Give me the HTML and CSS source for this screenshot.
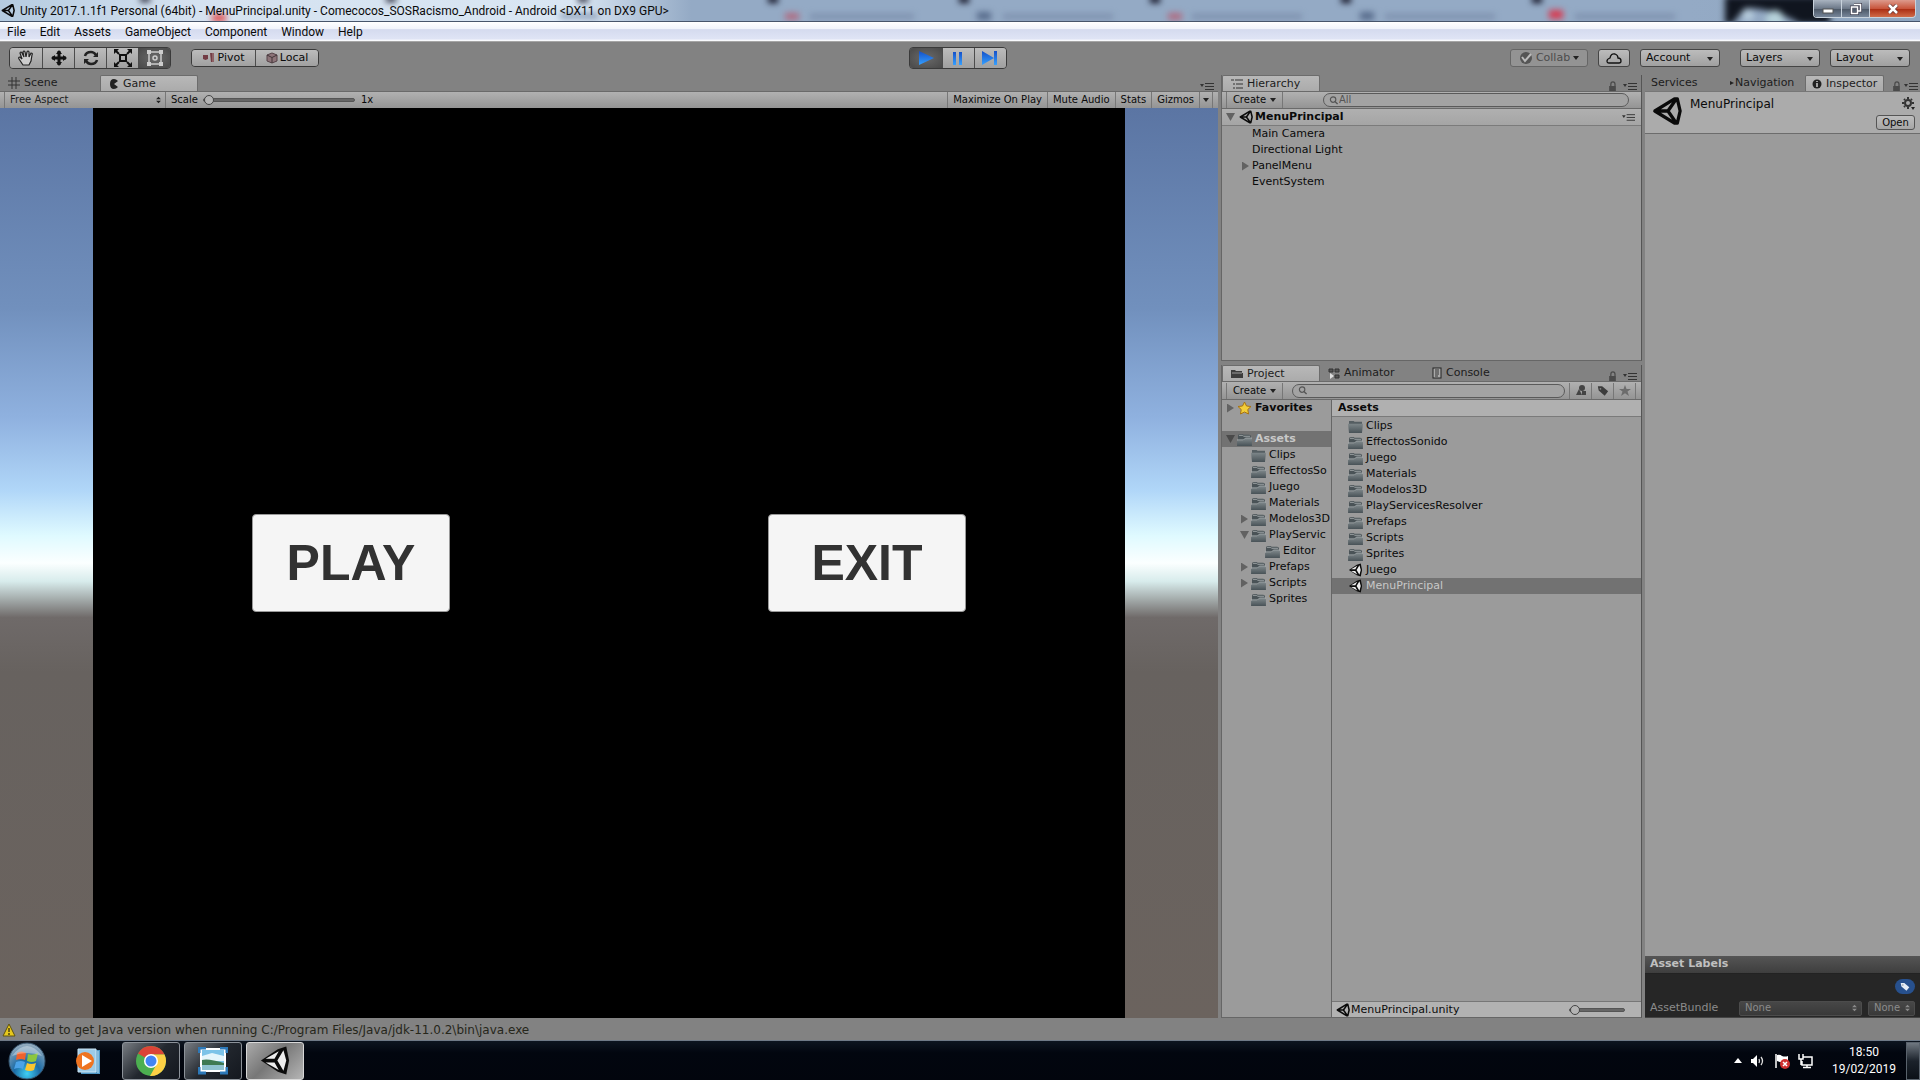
FILE: index.html
```html
<!DOCTYPE html>
<html lang="en">
<head>
    <meta charset="UTF-8">
    <meta name="viewport" content="width=device-width, initial-scale=1.0">
    <title>Unity 2017.1.1f1 Personal (64bit) - MenuPrincipal.unity</title>
    <link rel="stylesheet" href="styles.css">
</head>
<body>
    <!-- shared icons -->
    <svg class="defs" width="0" height="0" aria-hidden="true">
        <defs>
            <linearGradient id="folder-fill" x1="0" y1="0" x2="0" y2="1">
                <stop offset="0" stop-color="#7d8689"/>
                <stop offset="1" stop-color="#485257"/>
            </linearGradient>
            <linearGradient id="play-fill" x1="0" y1="0" x2="0" y2="1">
                <stop offset="0" stop-color="#1550c8"/>
                <stop offset="1" stop-color="#35a0ff"/>
            </linearGradient>
            <radialGradient id="orb-fill" cx="0.5" cy="0.85" r="0.8">
                <stop offset="0" stop-color="#3fd0f5"/>
                <stop offset="0.45" stop-color="#1c6ba5"/>
                <stop offset="1" stop-color="#8fa9bd"/>
            </radialGradient>
        </defs>
        <symbol id="unity" viewBox="0 0 32 32">
            <path d="M1 16 L19 4 L28 1 L31 16 L28 31 L19 28 Z" fill="currentColor"/>
            <path class="face" d="M6 14 L20 6 L15.500 14 Z M6 18 L15.500 18 L20 26 Z M18.500 16 L25 5 L28 16 L25 27 Z"/>
        </symbol>
        <symbol id="unity-line" viewBox="0 0 32 32">
            <path d="M3 16 L24 3 L27 3 L30 16 L27 29 L24 29 Z M3 16 H17 L26 3 M17 16 L26 29" fill="none" stroke="currentColor" stroke-width="3.500" stroke-linejoin="round"/>
        </symbol>
        <symbol id="folder" viewBox="0 0 16 14">
            <path d="M1 13 V3 Q1 1 3 1 H6 L7 2 H13 Q15 2 15 4 V13 Z" fill="#4a5357"/>
            <path d="M2 2.500 H6 L7 3.500 H14" fill="none" stroke="#a3a9ab"/>
            <path d="M0 14 V8 H7 L9 6 H16 V14 Z" fill="url(#folder-fill)"/>
            <path d="M0 7.500 H7 L9 5.500 H16" fill="none" stroke="#abb1b3"/>
        </symbol>
        <symbol id="folder-empty" viewBox="0 0 16 14">
            <path d="M1 5 V1 H6 L7 2 H15 V5" fill="#555e62"/>
            <path d="M0 4 H16 L15 14 H1 Z" fill="url(#folder-fill)"/>
        </symbol>
        <symbol id="lock" viewBox="0 0 10 12">
            <path d="M3 6 V4 Q3 1 5.500 1 Q8 1 8 4 V6" fill="none" stroke="#4a4a4a" stroke-width="1.500"/>
            <rect x="1" y="6" width="8" height="6" fill="#4a4a4a"/>
        </symbol>
        <symbol id="pane-menu" viewBox="0 0 14 10">
            <path d="M0 3 H4 L2 6 Z" fill="#333"/>
            <path d="M5 2.500 H14 M5 5.500 H14 M5 8.500 H14" stroke="#333"/>
        </symbol>
        <symbol id="updown" viewBox="0 0 6 10">
            <path d="M0 4 L3 1 L6 4 Z M0 6 L3 9 L6 6 Z" fill="currentColor"/>
        </symbol>
        <symbol id="magnifier" viewBox="0 0 10 10">
            <circle cx="4" cy="4" r="3" fill="none" stroke="#555" stroke-width="1.300"/>
            <path d="M6 6 L9 9" stroke="#555" stroke-width="1.500"/>
        </symbol>
        <symbol id="tag" viewBox="0 0 14 12">
            <path d="M1 1 H6 L13 7 L9 12 L2 6 Z" fill="currentColor"/>
            <circle cx="4" cy="4" r="1" fill="#888"/>
        </symbol>
    </svg>

    <header class="titlebar">
        <svg class="glass" aria-hidden="true">
            <g class="glass-marks">
                <rect x="212" y="14" width="14" height="8" fill="#e05050"/>
                <rect x="560" y="14" width="38" height="4" fill="#7286a3"/>
                <rect x="140" y="-4" width="10" height="6" fill="#223"/>
                <rect x="386" y="-4" width="10" height="6" fill="#223"/>
                <rect x="578" y="-4" width="10" height="6" fill="#223"/>
                <rect x="768" y="-4" width="10" height="7" fill="#112"/>
                <rect x="959" y="-4" width="10" height="7" fill="#112"/>
                <rect x="1150" y="-4" width="10" height="7" fill="#112"/>
                <rect x="1341" y="-4" width="10" height="7" fill="#112"/>
                <rect x="1532" y="-4" width="10" height="7" fill="#112"/>
                <rect x="785" y="13" width="14" height="7" fill="#b06a80"/>
                <rect x="810" y="14" width="104" height="5" fill="#7c8fac"/>
                <rect x="977" y="12" width="14" height="8" fill="#566a8a"/>
                <rect x="1003" y="14" width="110" height="5" fill="#7c8fac"/>
                <rect x="1168" y="13" width="14" height="7" fill="#b06a80"/>
                <rect x="1192" y="14" width="110" height="5" fill="#7c8fac"/>
                <rect x="1360" y="12" width="14" height="8" fill="#566a8a"/>
                <rect x="1385" y="14" width="110" height="5" fill="#7c8fac"/>
                <rect x="1549" y="10" width="14" height="9" fill="#d83a50"/>
                <rect x="1575" y="14" width="100" height="5" fill="#7c8fac"/>
                <path d="M1725 -4 H1830 V24 H1800 Q1775 8 1745 8 L1732 24 H1725 Z" fill="#10151f"/>
                <circle cx="1748" cy="15" r="6" fill="#b6ccdc"/>
                <circle cx="1775" cy="19" r="9" fill="#b6d2da"/>
            </g>
        </svg>
        <svg class="title-icon" width="14" height="15"><use href="#unity-line"/></svg>
        <h1>Unity 2017.1.1f1 Personal (64bit) - MenuPrincipal.unity - Comecocos_SOSRacismo_Android - Android &lt;DX11 on DX9 GPU&gt;</h1>
        <div class="window-buttons">
            <button aria-label="Minimize"><svg width="12" height="10"><rect x="1" y="5" width="10" height="4" fill="#fff" stroke="#555"/></svg></button>
            <button aria-label="Restore"><svg width="12" height="12"><path d="M4 1.500 H10.500 V8 H8 M1.500 4 H7.500 V10.500 H1.500 Z" fill="none" stroke="#445" stroke-width="3"/><path d="M4 1.500 H10.500 V8 H8 M1.500 4 H7.500 V10.500 H1.500 Z" fill="none" stroke="#fff" stroke-width="1.500"/></svg></button>
            <button class="close" aria-label="Close"><svg width="12" height="10"><path d="M2 1 L10 9 M10 1 L2 9" stroke="#633" stroke-width="4"/><path d="M2 1 L10 9 M10 1 L2 9" stroke="#fff" stroke-width="2.500"/></svg></button>
        </div>
    </header>

    <nav class="menubar">
        <button>File</button>
        <button>Edit</button>
        <button>Assets</button>
        <button>GameObject</button>
        <button>Component</button>
        <button>Window</button>
        <button>Help</button>
    </nav>

    <div class="toolbar">
        <div class="toolbar-left">
            <div class="tools">
                <button aria-label="Hand"><svg width="18" height="18"><path d="M6 16 L2 10 Q1 8 3 8 L5 10 L3 4 Q4 2 5 4 L7 8 L6 3 Q7 1 8 3 L9 8 L10 3 Q11 1 12 3 L12 8 L14 4 Q16 4 15 6 L14 12 L12 16 Z" fill="#ccc" stroke="#222" stroke-width="1.200"/></svg></button>
                <button aria-label="Move"><svg width="18" height="18"><path d="M9 2 V16 M2 9 H16" stroke="#111" stroke-width="3"/><path d="M9 1 L12 5 H6 Z M9 17 L12 13 H6 Z M1 9 L5 6 V12 Z M17 9 L13 6 V12 Z" fill="#111"/></svg></button>
                <button aria-label="Rotate"><svg width="18" height="18"><path d="M3 7 Q4 3 9 3 Q12 3 14 6 M15 11 Q14 15 9 15 Q6 15 4 12" fill="none" stroke="#222" stroke-width="2.500"/><path d="M16 3 V8 H11 Z M2 15 V10 H7 Z" fill="#222"/></svg></button>
                <button aria-label="Scale objects"><svg width="18" height="18"><rect x="6" y="6" width="6" height="6" fill="none" stroke="#111" stroke-width="2"/><path d="M1 1 L5 5 M17 1 L13 5 M1 17 L5 13 M17 17 L13 13" stroke="#111" stroke-width="2"/><path d="M0 0 H5 L0 5 Z M18 0 H13 L18 5 Z M0 18 H5 L0 13 Z M18 18 H13 L18 13 Z" fill="#111"/></svg></button>
                <button class="pressed" aria-label="Rect"><svg width="18" height="18"><rect x="3" y="3" width="12" height="12" fill="none" stroke="#ccc" stroke-width="1.500"/><circle cx="9" cy="9" r="2" fill="none" stroke="#ccc" stroke-width="1.500"/><path d="M1 1 H5 V5 H1 Z M13 1 H17 V5 H13 Z M1 13 H5 V17 H1 Z M13 13 H17 V17 H13 Z" fill="#ccc"/></svg></button>
            </div>
            <div class="handles">
                <button><svg width="13" height="11"><path d="M1 3 H6 V7 L3.500 8 L1 7 Z" fill="#733c44"/><path d="M8 1 H12 V10 H9 Z" fill="#733c44"/><path d="M11 1 V10" stroke="#a88"/></svg>Pivot</button>
                <button><svg width="12" height="12"><path d="M6 1 L11 3 V9 L6 11 L1 9 V3 Z" fill="#8d7479" stroke="#554349"/><path d="M1 3 L6 5.500 L11 3 M6 5.500 V11" fill="none" stroke="#403439"/></svg>Local</button>
            </div>
        </div>
        <div class="play-controls">
            <button class="pressed" aria-label="Play"><svg width="18" height="16"><path d="M2 1 L17 8 L2 15 Z" fill="url(#play-fill)"/></svg></button>
            <button aria-label="Pause"><svg width="18" height="16"><path d="M4 2 H7 V15 H4 Z M10 2 H13 V15 H10 Z" fill="url(#play-fill)"/></svg></button>
            <button aria-label="Step"><svg width="18" height="16"><path d="M1 1 L13 8 L1 15 Z M13 1 H16 V15 H13 Z" fill="url(#play-fill)"/></svg></button>
        </div>
        <div class="toolbar-right">
            <button class="collab"><svg width="14" height="14"><circle cx="7" cy="7" r="6" fill="#555"/><path d="M3 6 L6 10 L12 3" fill="none" stroke="#bbb" stroke-width="2"/></svg>Collab<span class="caret"></span></button>
            <button class="cloud" aria-label="Cloud"><svg width="16" height="12"><path d="M3 11 Q1 11 1 9 Q1 7 4 6 Q5 1 9 2 Q12 3 12 6 Q15 6 15 9 Q15 11 13 11 Z" fill="none" stroke="#111" stroke-width="1.300"/></svg></button>
            <span class="drop account"><select aria-label="Account"><option>Account</option></select></span>
            <span class="drop"><select aria-label="Layers"><option>Layers</option></select></span>
            <span class="drop"><select aria-label="Layout"><option>Layout</option></select></span>
        </div>
    </div>

    <main class="workspace">
        <section class="game">
            <div class="tabs">
                <button class="tab scene-tab"><svg width="12" height="12"><path d="M4 0 V12 M8 0 V12 M0 4 H12 M0 8 H12" stroke="#333"/></svg>Scene</button>
                <button class="tab active game-tab"><svg width="10" height="10"><path d="M9 2 Q7 0 5 0 Q1 0 1 5 Q1 10 5 10 Q7 10 9 8 L5 5 Z" fill="#222"/></svg>Game</button>
                <span class="tab-tools"><svg width="14" height="10"><use href="#pane-menu"/></svg></span>
            </div>
            <div class="subbar">
                <span class="aspect"><select aria-label="Aspect"><option>Free Aspect</option></select><svg width="5" height="8"><use href="#updown"/></svg></span>
                <label for="scale">Scale</label>
                <input id="scale" class="scale" type="range" min="1" max="5" value="1">
                <span class="scale-value">1x</span>
                <div class="subbar-buttons">
                    <button>Maximize On Play</button>
                    <button>Mute Audio</button>
                    <button>Stats</button>
                    <button>Gizmos</button>
                    <button class="gizmos-arrow" aria-label="Gizmos menu"><span class="caret"></span></button>
                </div>
            </div>
            <div class="viewport">
                <div class="stage">
                    <button>PLAY</button>
                    <button>EXIT</button>
                </div>
            </div>
        </section>

        <div class="middle">
            <section class="hierarchy">
                <div class="tabs">
                    <button class="tab active hierarchy-tab"><svg width="12" height="10"><path d="M0 1 H3 M4 1 H12 M2 5 H4 M5 5 H12 M2 9 H4 M5 9 H12" stroke="#333"/></svg>Hierarchy</button>
                    <span class="tab-tools"><svg width="9" height="10"><use href="#lock"/></svg><svg width="14" height="10"><use href="#pane-menu"/></svg></span>
                </div>
                <div class="subbar">
                    <button class="create">Create<span class="caret"></span></button>
                    <label class="search hierarchy-search"><svg width="10" height="9"><use href="#magnifier"/></svg><input type="text" placeholder="All" aria-label="Search hierarchy"></label>
                </div>
                <div class="scene-row"><span class="arrow open"></span><svg width="14" height="14"><use href="#unity-line"/></svg><b>MenuPrincipal</b><svg class="row-menu" width="13" height="10"><use href="#pane-menu"/></svg></div>
                <ul class="tree objects">
                    <li><span class="arrow none"></span>Main Camera</li>
                    <li><span class="arrow none"></span>Directional Light</li>
                    <li><span class="arrow"></span>PanelMenu</li>
                    <li><span class="arrow none"></span>EventSystem</li>
                </ul>
            </section>

            <section class="project">
                <div class="tabs">
                    <button class="tab active project-tab"><svg width="12" height="10"><path d="M0 9 V1 H4 L5 2 H11 V4 H12 V9 Z" fill="#3c3c3c"/><path d="M1 4 H11" stroke="#999"/></svg>Project</button>
                    <button class="tab animator-tab"><svg width="12" height="11"><path d="M1 1 H5 V4 H1 Z M7 1 H11 V4 H7 Z M7 7 H11 V10 H7 Z" fill="#555" stroke="#333"/><path d="M2 5 L6 8 L2 11 Z" fill="#ddd"/></svg>Animator</button>
                    <button class="tab console-tab"><svg width="10" height="12"><rect x="1" y="1" width="8" height="10" fill="#aaa" stroke="#222"/><path d="M3 3 H7 M3 5 H7 M3 7 H7 M3 9 H6" stroke="#333"/></svg>Console</button>
                    <span class="tab-tools"><svg width="9" height="10"><use href="#lock"/></svg><svg width="14" height="10"><use href="#pane-menu"/></svg></span>
                </div>
                <div class="subbar">
                    <button class="create">Create<span class="caret"></span></button>
                    <label class="search project-search"><svg width="10" height="9"><use href="#magnifier"/></svg><input type="text" aria-label="Search project"></label>
                    <div class="filters">
                        <button aria-label="Search by type"><svg width="12" height="11"><path d="M1 10 L4 4 L7 10 Z" fill="#444"/><circle cx="7" cy="3" r="3" fill="#444"/><rect x="7" y="6" width="4" height="4" fill="#444"/></svg></button>
                        <button aria-label="Search by label"><svg class="tag" width="12" height="11"><use href="#tag"/></svg></button>
                        <button aria-label="Save search"><svg width="12" height="11"><path d="M6 0 L7.500 4 H12 L8.500 6.500 L10 11 L6 8.200 L2 11 L3.500 6.500 L0 4 H4.500 Z" fill="#6c6c6c"/></svg></button>
                    </div>
                </div>
                <div class="browser">
                    <ul class="tree folders">
                        <li class="favorites"><span class="arrow"></span><svg width="15" height="14" viewBox="0 0 15 14"><path d="M7.500 1 L9.500 5 L14 5.500 L10.800 8.500 L11.500 13 L7.500 11 L3.500 13 L4.200 8.500 L1 5.500 L5.500 5 Z" fill="#f2ce3a" stroke="#a9730f"/></svg><b>Favorites</b></li>
                        <li class="selected"><span class="arrow open"></span><svg width="15" height="13"><use href="#folder"/></svg><b>Assets</b></li>
                        <li class="child"><span class="arrow none"></span><svg width="15" height="13"><use href="#folder-empty"/></svg>Clips</li>
                        <li class="child"><span class="arrow none"></span><svg width="15" height="13"><use href="#folder"/></svg>EffectosSo</li>
                        <li class="child"><span class="arrow none"></span><svg width="15" height="13"><use href="#folder"/></svg>Juego</li>
                        <li class="child"><span class="arrow none"></span><svg width="15" height="13"><use href="#folder"/></svg>Materials</li>
                        <li class="child"><span class="arrow"></span><svg width="15" height="13"><use href="#folder"/></svg>Modelos3D</li>
                        <li class="child"><span class="arrow open"></span><svg width="15" height="13"><use href="#folder"/></svg>PlayServic</li>
                        <li class="grandchild"><span class="arrow none"></span><svg width="15" height="13"><use href="#folder"/></svg>Editor</li>
                        <li class="child"><span class="arrow"></span><svg width="15" height="13"><use href="#folder"/></svg>Prefaps</li>
                        <li class="child"><span class="arrow"></span><svg width="15" height="13"><use href="#folder"/></svg>Scripts</li>
                        <li class="child"><span class="arrow none"></span><svg width="15" height="13"><use href="#folder"/></svg>Sprites</li>
                    </ul>
                    <div class="contents">
                        <h2>Assets</h2>
                        <ul class="tree files">
                            <li><svg width="15" height="13"><use href="#folder-empty"/></svg>Clips</li>
                            <li><svg width="15" height="13"><use href="#folder"/></svg>EffectosSonido</li>
                            <li><svg width="15" height="13"><use href="#folder"/></svg>Juego</li>
                            <li><svg width="15" height="13"><use href="#folder"/></svg>Materials</li>
                            <li><svg width="15" height="13"><use href="#folder"/></svg>Modelos3D</li>
                            <li><svg width="15" height="13"><use href="#folder"/></svg>PlayServicesResolver</li>
                            <li><svg width="15" height="13"><use href="#folder"/></svg>Prefaps</li>
                            <li><svg width="15" height="13"><use href="#folder"/></svg>Scripts</li>
                            <li><svg width="15" height="13"><use href="#folder"/></svg>Sprites</li>
                            <li><svg width="15" height="14"><use href="#unity"/></svg>Juego</li>
                            <li class="selected"><svg width="15" height="14"><use href="#unity"/></svg>MenuPrincipal</li>
                        </ul>
                        <div class="path-bar">
                            <svg width="14" height="14"><use href="#unity-line"/></svg>
                            <span>MenuPrincipal.unity</span>
                            <input class="zoom" type="range" value="0" aria-label="Icon size">
                        </div>
                    </div>
                </div>
            </section>
        </div>

        <section class="inspector">
            <div class="tabs">
                <button class="tab services-tab">Services</button>
                <button class="tab navigation-tab"><svg width="4" height="6"><path d="M0 1 L4 3 L0 5 Z" fill="#222"/></svg>Navigation</button>
                <button class="tab active inspector-tab"><svg width="10" height="10"><circle cx="5" cy="5" r="4.500" fill="#222"/><path d="M5 2 V3 M5 4 V8" stroke="#ccc" stroke-width="1.500"/></svg>Inspector</button>
                <span class="tab-tools"><svg width="9" height="10"><use href="#lock"/></svg><svg width="14" height="10"><use href="#pane-menu"/></svg></span>
            </div>
            <div class="asset-header">
                <svg width="30" height="32"><use href="#unity-line"/></svg>
                <h2>MenuPrincipal</h2>
                <div class="asset-actions">
                    <button class="gear" aria-label="Settings"><svg width="13" height="13"><circle cx="6" cy="6" r="3" fill="none" stroke="#333" stroke-width="2"/><path d="M6 0 V2 M6 10 V12 M0 6 H2 M10 6 H12 M2 2 L3 3 M9 3 L10 2 M2 10 L3 9" stroke="#333" stroke-width="2"/><path d="M9 10 H13 L11 13 Z" fill="#222"/></svg></button>
                    <button class="open-button">Open</button>
                </div>
            </div>
            <div class="inspector-body"></div>
            <div class="labels">
                <h3>Asset Labels</h3>
                <div class="labels-body">
                    <button class="label-tag" aria-label="Add label"><svg width="10" height="9"><use href="#tag"/></svg></button>
                    <div class="bundle">
                        <label for="bundle">AssetBundle</label>
                        <span class="bundle-select"><select id="bundle"><option>None</option></select><svg width="5" height="8"><use href="#updown"/></svg></span>
                        <span class="bundle-select variant"><select aria-label="Variant"><option>None</option></select><svg width="5" height="8"><use href="#updown"/></svg></span>
                    </div>
                </div>
            </div>
        </section>
    </main>

    <div class="status">
        <svg width="14" height="14"><path d="M7 1 L13 13 H1 Z" fill="#e8c91c" stroke="#5e5210" stroke-linejoin="round"/><path d="M7 5 V9 M7 10 V12" stroke="#4a4110" stroke-width="1.500"/></svg>
        <span>Failed to get Java version when running C:/Program Files/Java/jdk-11.0.2\bin\java.exe</span>
    </div>

    <footer class="taskbar">
        <button class="start" aria-label="Start"><svg width="38" height="38" viewBox="0 0 38 38"><circle cx="19" cy="19" r="18" fill="url(#orb-fill)" stroke="#35526b"/><path d="M9 11 Q14 8 18 11 L17 18 Q13 16 8 18 Z" fill="#f0622c"/><path d="M20 12 Q24 14 30 11 L28 19 Q24 21 19 19 Z" fill="#8cc63f"/><path d="M8 20 Q13 18 17 20 L15 27 Q11 25 6 27 Z" fill="#4ba3e8"/><path d="M19 21 Q23 23 28 21 L26 28 Q22 30 17 28 Z" fill="#fbc62f"/><path d="M4 14 Q19 -6 34 14 Q19 8 4 14 Z" fill="#fff" opacity="0.35"/></svg></button>
        <button class="pinned" aria-label="Media player"><svg width="28" height="28"><path d="M7 3 H26 V27 H7 Z" fill="#4e96c4"/><path d="M4 2 H22 V25 H4 Z" fill="#9ccbe8" stroke="#cde6f5"/><path d="M24 4 V26" stroke="#bde0f3"/><circle cx="11" cy="14" r="9" fill="#ee7421"/><path d="M8 8 L18 14 L8 20 Z" fill="#fff"/></svg></button>
        <button class="task" aria-label="Chrome"><svg width="32" height="32" viewBox="0 0 32 32"><circle cx="16" cy="16" r="15" fill="#4caf50"/><path d="M16 16 L3 8.500 A15 15 0 0 1 29.500 9.500 H16 Z" fill="#db4437"/><path d="M16 9.500 H29.500 A15 15 0 0 1 15 31 L21.500 19.500 Z" fill="#fdd045"/><circle cx="16" cy="16" r="7" fill="#fff"/><circle cx="16" cy="16" r="5.500" fill="#4285f4"/></svg></button>
        <button class="task" aria-label="Pictures"><svg width="30" height="28"><rect x="3" y="2" width="24" height="22" fill="#7cc3e8" stroke="#fff" stroke-width="2"/><path d="M4 9 L14 6 L26 9 V14 H4 Z" fill="#e4f5fb"/><path d="M4 13 Q10 11 26 16 V18 H4 Z" fill="#3f7a52"/><path d="M4 18 H26 V23 H4 Z" fill="#8fc2cf"/><path d="M1 6 V1 H8 M22 1 H29 V6 M29 20 V26 H22 M8 26 H1 V20" fill="none" stroke="#2c78b8" stroke-width="3"/></svg></button>
        <button class="task current" aria-label="Unity"><svg width="30" height="31"><use href="#unity"/></svg></button>
        <div class="tray">
            <svg width="8" height="5"><path d="M0 5 L4 0 L8 5 Z" fill="#fff"/></svg>
            <svg width="16" height="14"><path d="M1 5 H3 L7 1 V13 L3 9 H1 Z" fill="#fff"/><path d="M9 5 Q10 7 9 9 M11 3 Q14 7 11 11" fill="none" stroke="#ddd" stroke-width="1.300"/></svg>
            <svg width="16" height="16"><path d="M2 1 V15" stroke="#fff" stroke-width="1.500"/><path d="M3 2 Q6 1 8 3 Q11 4 14 3 V10 Q8 10 3 8 Z" fill="#fff"/><circle cx="11" cy="11" r="5" fill="#d03030"/><path d="M9 9 L13 13 M13 9 L9 13" stroke="#fff" stroke-width="1.500"/></svg>
            <svg width="16" height="16"><path d="M5 4 H14 V12 H4 V8 M9 12 V14 M5 14.500 H13 M1 1 V6 H5 V1 M3 6 V12" fill="none" stroke="#fff" stroke-width="1.500"/></svg>
            <div class="clock"><span>18:50</span><span>19/02/2019</span></div>
        </div>
        <button class="show-desktop" aria-label="Show desktop"></button>
    </footer>
</body>
</html>
```
FILE: styles.css
```css
* {
    box-sizing: border-box;
}
body {
    margin: 0;
    height: 100vh;
    display: flex;
    flex-direction: column;
    overflow: hidden;
    background-color: #828282;
    color: #0a0a0a;
    font-family: "DejaVu Sans", Verdana, sans-serif;
    font-size: 11px;
    line-height: 16px;
}
button, select, input {
    font: inherit;
    color: inherit;
    margin: 0;
    padding: 0;
    border: none;
    border-radius: 0;
    background: none;
    white-space: nowrap;
}
button {
    display: flex;
    align-items: center;
    justify-content: center;
}
select {
    appearance: none;
}
svg {
    flex: none;
}
h1, h2, h3, ul {
    margin: 0;
    padding: 0;
    font-size: inherit;
    font-weight: normal;
    list-style: none;
}
.defs {
    position: absolute;
}
.face {
    fill: #eee;
}
.caret {
    border: 3px solid transparent;
    border-top: 4px solid #222;
    border-bottom: 0;
}

/* window title */
.titlebar {
    position: relative;
    display: flex;
    align-items: center;
    height: 22px;
    padding-left: 1px;
    background: linear-gradient(90deg, #b4cbe0 0, #d5e2f0 10%, #d9e6f3 30%, #94aac5 36%, #94aac5 88%, #8fa6c0 100%);
    border-bottom: 1px solid #47556b;
    font-family: Roboto, "Segoe UI", sans-serif;
    font-size: 12px;
}
.glass {
    position: absolute;
    left: 0;
    top: 0;
    width: 100%;
    height: 100%;
}
.glass-marks {
    filter: blur(3px);
}
.title-icon, .titlebar h1, .window-buttons {
    position: relative;
}
.titlebar h1 {
    padding-left: 5px;
    flex: 1;
    white-space: nowrap;
}
.window-buttons {
    display: flex;
    align-self: flex-start;
    height: 18px;
    margin-right: 4px;
    border: 1px solid #c8d2dc;
    border-top: 0;
    border-radius: 0 0 4px 4px;
    overflow: hidden;
}
.window-buttons button {
    width: 28px;
    background: linear-gradient(#a9b3c0, #6c7888 50%, #4a5564 51%, #77869a);
    border-right: 1px solid #c8d2dc;
}
.window-buttons .close {
    width: 45px;
    border: 0;
    background: linear-gradient(#dd9a8c, #c8553c 50%, #a92a10 51%, #d06b48);
}

.menubar {
    display: flex;
    height: 20px;
    background: linear-gradient(#fff, #f1f4fb 35%, #d5dbef 40%, #dfe4f5 88%, #fff);
    border-bottom: 1px solid #a5a5a5;
    font-family: Roboto, "Segoe UI", sans-serif;
    font-size: 12px;
}
.menubar button {
    padding: 0 7px;
}

/* main toolbar */
.toolbar {
    display: grid;
    grid-template-columns: 1fr auto 1fr;
    align-items: center;
    height: 33px;
    padding: 0 10px 2px 9px;
}
.toolbar-left, .toolbar-right, .tools, .handles, .play-controls {
    display: flex;
    align-items: center;
}
.toolbar-left {
    gap: 20px;
}
.tools, .handles, .play-controls {
    border: 1px solid #3a3a3a;
    border-radius: 4px;
    overflow: hidden;
}
.toolbar button, .drop select {
    background: linear-gradient(#bcbcbc, #a0a0a0);
}
.toolbar .pressed {
    background: radial-gradient(#6a6a6a, #484848);
}
.tools button + button, .handles button + button, .play-controls button + button {
    border-left: 1px solid #4c4c4c;
}
.tools button, .play-controls button {
    width: 32px;
    height: 20px;
}
.play-controls {
    margin-right: 4px;
}
.handles button {
    width: 63px;
    height: 16px;
    gap: 2px;
}
.toolbar-right {
    justify-content: flex-end;
    gap: 10px;
}
.toolbar-right button, .drop select {
    height: 18px;
    border: 1px solid #454545;
    border-radius: 3px;
}
.toolbar-right .collab {
    width: 78px;
    gap: 3px;
    background: #939393;
    border-color: #666;
    color: #4c4c4c;
}
.cloud {
    width: 32px;
}
.drop {
    position: relative;
}
.drop select {
    display: block;
    width: 80px;
    padding-left: 5px;
}
.drop::after {
    content: "";
    position: absolute;
    right: 7px;
    top: 8px;
    border: 3px solid transparent;
    border-top: 4px solid #222;
    border-bottom: 0;
}
.account {
    margin-right: 10px;
}

/* docked panes */
.workspace {
    flex: 1;
    min-height: 0;
    display: grid;
    grid-template-columns: 1fr 421px 275px;
    gap: 3px;
}
.game, .hierarchy, .project, .inspector {
    display: flex;
    flex-direction: column;
    min-width: 0;
    min-height: 0;
}
.middle {
    display: grid;
    grid-template-rows: 286px 1fr;
    gap: 4px;
    min-height: 0;
}
.hierarchy, .project {
    background-color: #9b9b9b;
    border-right: 1px solid #555;
    border-left: 1px solid #666;
    border-bottom: 1px solid #666;
}
.tabs {
    display: flex;
    align-items: flex-end;
    height: 16px;
    flex: none;
    background-color: #828282;
}
.tab {
    height: 16px;
    gap: 4px;
    justify-content: flex-start;
    padding: 0 8px;
    color: #1c1c1c;
}
.tab.active {
    background: linear-gradient(#b8b8b8, #ababab);
    border: 1px solid #6c6c6c;
    border-bottom: 0;
    border-radius: 2px 2px 0 0;
}
.game-tab, .hierarchy-tab, .project-tab {
    width: 98px;
}
.scene-tab {
    width: 100px;
}
.animator-tab {
    width: 104px;
}
.services-tab {
    width: 80px;
    padding-left: 6px;
}
.navigation-tab {
    width: 80px;
    gap: 1px;
    padding: 0 5px;
}
.inspector-tab {
    padding: 0 6px;
}
.tab-tools {
    display: flex;
    gap: 6px;
    margin-left: auto;
    padding-right: 4px;
}
.inspector .tab-tools {
    gap: 3px;
    padding-right: 2px;
}
.subbar {
    display: flex;
    align-items: center;
    flex: none;
    height: 18px;
    background: linear-gradient(#b1b1b1, #949494);
    border-top: 1px solid #6a6a6a;
    border-bottom: 1px solid #6a6a6a;
    font-size: 10px;
}
.game .subbar {
    height: 17px;
    border-bottom: 0;
}
.project .subbar {
    height: 19px;
}
.subbar button {
    height: 16px;
}
.aspect {
    display: flex;
    align-items: center;
    width: 162px;
    margin-left: 4px;
    padding-right: 4px;
    border: 1px solid #777;
    border-width: 0 1px;
    color: #222;
}
.aspect select {
    flex: 1;
    height: 16px;
    padding-left: 5px;
}
.subbar > label {
    padding-left: 5px;
}
input[type="range"] {
    appearance: none;
    height: 12px;
}
input[type="range"]::-webkit-slider-runnable-track {
    height: 4px;
    border: 1px solid #555;
    border-radius: 2px;
    background-color: #666;
}
input[type="range"]::-webkit-slider-thumb {
    appearance: none;
    width: 10px;
    height: 10px;
    margin-top: -4px;
    border: 1px solid #444;
    border-radius: 50%;
    background-color: #b4b4b4;
}
.scale {
    width: 152px;
    margin-left: 5px;
}
.scale-value {
    padding-left: 6px;
}
.subbar-buttons {
    display: flex;
    margin-left: auto;
    padding-right: 5px;
}
.subbar-buttons button {
    padding: 0 5px;
    border-left: 1px solid #777;
}
.subbar-buttons .gizmos-arrow {
    padding: 0 3px;
    border-right: 1px solid #777;
}

/* game view */
.viewport {
    flex: 1;
    padding: 0 93px;
    background: linear-gradient(#5b75a3 0, #7190bd 22%, #8fb1df 34%, #b0d6f8 42%, #dffaff 47%, #fbffff 50%, #d8ecec 52%, #6f6a69 56%, #67625f 62%, #6b635e 100%);
}
.stage {
    display: flex;
    align-items: center;
    justify-content: space-around;
    height: 100%;
    background-color: #000;
}
.stage button {
    width: 198px;
    height: 98px;
    border: 1px solid #999;
    border-radius: 4px;
    background-color: #f5f5f5;
    color: #323232;
    font: bold 50px "Liberation Sans", Arial, sans-serif;
}

/* lists */
.create {
    gap: 4px;
    width: 57px;
    margin-left: 4px;
    border: 1px solid #777;
    border-width: 0 1px;
}
.search {
    display: flex;
    align-items: center;
    height: 14px;
    flex: 1;
    border: 1px solid #5a5a5a;
    border-radius: 7px;
    background-color: #a3a3a3;
}
.search input {
    flex: 1;
    min-width: 0;
    height: 12px;
    outline: none;
}
.search input::placeholder {
    color: #555;
}
.hierarchy-search {
    margin: 0 12px 0 40px;
}
.project-search {
    margin: 0 4px 0 9px;
}
.filters {
    display: flex;
}
.filters button {
    width: 22px;
    border-left: 1px solid #777;
}
.filters button:last-child {
    width: 23px;
    border-right: 1px solid #777;
    margin-right: 5px;
}
.tag {
    color: #3c3c3c;
}
.arrow {
    flex: none;
    width: 7px;
    height: 9px;
    margin: 0 3px 0 1px;
    background-color: #626262;
    clip-path: polygon(0 0, 100% 50%, 0 100%);
}
.arrow.open {
    width: 9px;
    height: 8px;
    margin: 0 2px 0 0;
    clip-path: polygon(0 0, 100% 0, 50% 100%);
}
.arrow.none {
    visibility: hidden;
}
.scene-row {
    display: flex;
    align-items: center;
    height: 17px;
    gap: 2px;
    padding: 0 6px 0 4px;
    background: linear-gradient(#b0b0b0, #a5a5a5);
    border-bottom: 1px solid #7b7b7b;
}
.row-menu {
    margin-left: auto;
}
.tree li {
    display: flex;
    align-items: center;
    height: 16px;
    white-space: nowrap;
}
.tree svg {
    margin-right: 3px;
}
.objects li {
    padding-left: 19px;
}
.browser {
    display: grid;
    grid-template-columns: 110px 1fr;
    flex: 1;
    min-height: 0;
}
.folders {
    border-right: 1px solid #666;
}
.folders li {
    padding-left: 4px;
}
.folders .favorites {
    margin-bottom: 15px;
}
.folders .child {
    padding-left: 18px;
}
.folders .grandchild {
    padding-left: 32px;
}
.tree .selected {
    background-color: #727272;
    color: #c8c8c8;
}
.tree .selected svg {
    color: #0a0a0a;
}
.tree .selected .arrow {
    background-color: #4a4a4a;
}
.contents {
    display: flex;
    flex-direction: column;
}
.contents h2 {
    height: 17px;
    padding-left: 6px;
    background-color: #b0b0b0;
    border-bottom: 1px solid #7a7a7a;
    font-weight: bold;
}
.files {
    flex: 1;
    padding-top: 1px;
}
.files li {
    padding-left: 16px;
}
.path-bar {
    display: flex;
    align-items: center;
    height: 16px;
    padding: 0 16px 0 4px;
    gap: 1px;
    background-color: #b2b2b2;
    border-top: 1px solid #777;
}
.zoom {
    width: 56px;
    margin-left: auto;
}

/* inspector */
.inspector {
    background-color: #9b9b9b;
}
.asset-header {
    display: flex;
    height: 43px;
    padding: 3px 5px 3px 7px;
    background-color: #ababab;
    border-top: 1px solid #777;
    border-bottom: 1px solid #6c6c6c;
}
.asset-header h2 {
    flex: 1;
    padding: 1px 0 0 8px;
    font-size: 12px;
}
.asset-actions {
    display: flex;
    flex-direction: column;
    align-items: flex-end;
    justify-content: space-between;
}
.gear {
    height: 16px;
}
.open-button {
    width: 39px;
    height: 15px;
    border: 1px solid #555;
    border-radius: 3px;
    background: linear-gradient(#bebebe, #a6a6a6);
    font-size: 10px;
}
.inspector-body {
    flex: 1;
}
.labels {
    border-bottom: 1px solid #444;
    color: #8b8b8b;
}
.labels h3 {
    height: 18px;
    padding-left: 5px;
    background: linear-gradient(#555, #3e3e3e);
    border-bottom: 1px solid #222;
    color: #c0c0c0;
    font-weight: bold;
}
.labels-body {
    display: flex;
    flex-direction: column;
    gap: 6px;
    padding: 5px 5px 1px;
    background-color: #262626;
}
.label-tag {
    align-self: flex-end;
    width: 20px;
    height: 15px;
    border-radius: 8px;
    background-color: #27508d;
    color: #e6edf6;
}
.bundle {
    display: flex;
    align-items: center;
    gap: 6px;
}
.bundle label {
    width: 83px;
}
.bundle-select {
    display: flex;
    align-items: center;
    flex: 1;
    height: 15px;
    padding: 0 4px 0 5px;
    background: linear-gradient(#474747, #393939);
    border: 1px solid #4c4c4c;
    border-radius: 2px;
    font-size: 10px;
}
.bundle-select select {
    flex: 1;
    min-width: 0;
}
.variant {
    flex: none;
    width: 47px;
}

.status {
    display: flex;
    align-items: center;
    gap: 4px;
    height: 22px;
    padding: 2px 2px 0;
    color: #26261a;
    font-size: 12px;
}

/* windows taskbar */
.taskbar {
    display: flex;
    align-items: center;
    height: 40px;
    padding-left: 8px;
    background: linear-gradient(#0d1520, #02060f 30%, #02050d);
    border-top: 1px solid #6f7a87;
    color: #fff;
    font-family: Roboto, "Segoe UI", sans-serif;
    font-size: 12px;
}
.pinned {
    width: 58px;
    margin: 0 5px 0 13px;
}
.task {
    width: 58px;
    height: 38px;
    margin-right: 4px;
    border: 1px solid #8c9299;
    border-radius: 3px;
    background: linear-gradient(135deg, #777c82, #22272e 50%, #14181f);
}
.current {
    border-color: #d8d8d8;
    background: linear-gradient(135deg, #aaa, #777 45%, #b5b5b5);
    color: #0c0c0c;
}
.tray {
    display: flex;
    align-items: center;
    gap: 8px;
    margin-left: auto;
}
.clock {
    display: flex;
    flex-direction: column;
    align-items: center;
    width: 84px;
    line-height: 17px;
}
.show-desktop {
    width: 14px;
    height: 38px;
    border: 1px solid #59626c;
    background: linear-gradient(#6f7780, #1b222b 50%, #0b1017);
}
```
